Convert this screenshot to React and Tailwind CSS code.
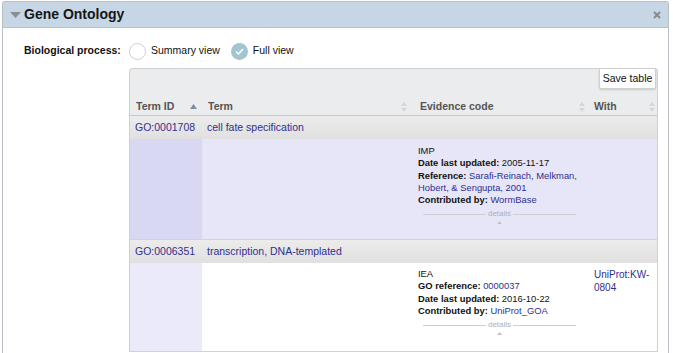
import React from "react";

const LINK = "text-[#2f2f8e]";

function SortBoth() {
  return (
    <svg width="6" height="10" viewBox="0 0 6 10">
      <path d="M3 0L6 4H0z" fill="#d6d6d6" />
      <path d="M3 10L6 6H0z" fill="#d6d6d6" />
    </svg>
  );
}

function SortAsc() {
  return (
    <svg width="7" height="5" viewBox="0 0 7 5" className="mb-[5px]">
      <path d="M3.5 0L7 5H0z" fill="#7d8ca6" />
    </svg>
  );
}

function Details() {
  return (
    <div className="ml-[5px] w-[153px] mt-[3px]">
      <div className="flex items-center h-[10px]">
        <div className="flex-1 h-px bg-[#cfcfcf]" />
        <span className="px-[2px] text-[8px] text-[#b0b0b0] leading-none">details</span>
        <div className="flex-1 h-px bg-[#cfcfcf]" />
      </div>
      <div className="flex justify-center mt-[2px]">
        <svg width="5" height="3" viewBox="0 0 5 3">
          <path d="M2.5 0L5 3H0z" fill="#c2c2c2" />
        </svg>
      </div>
    </div>
  );
}

function GroupRow({ id, term }) {
  return (
    <div className="grid grid-cols-[72px_211px_175px_69px] h-[23px] items-center bg-gradient-to-b from-[#ececec] to-[#e0e0e0]">
      <div className={`pl-[5px] ${LINK}`}>{id}</div>
      <div className={`pl-[5px] ${LINK}`}>{term}</div>
      <div />
      <div />
    </div>
  );
}

export default function App() {
  return (
    <div className="w-[673px] h-[353px] overflow-hidden bg-white font-['Liberation_Sans',Arial,sans-serif] text-[10.5px] text-[#111]">
      <div className="ml-[2px] mr-[4px] mt-[1px] h-[352px] border-x border-t border-[#b9bec4] rounded-t-[3px] flex flex-col">
        <div className="h-[26px] bg-[#c7d6e4] flex items-center border-b border-[#b5c3d1] shrink-0">
          <svg width="11" height="6" viewBox="0 0 11 6" className="ml-[7px]">
            <path d="M0 0H11L5.5 6z" fill="#8a8f96" />
          </svg>
          <span className="ml-[3px] text-[14px] font-bold text-[#161616]">Gene Ontology</span>
          <svg width="8" height="8" viewBox="0 0 8 8" className="ml-auto mr-[7px]">
            <path d="M1 1L7 7M7 1L1 7" stroke="#8a8a8a" strokeWidth="2" />
          </svg>
        </div>

        <div className="flex pl-[21px] pt-[14px]">
          <div className="w-[105px] h-[18px] flex items-center font-bold">Biological process:</div>
          <div className="w-[529px]">
            <div className="flex items-center h-[18px]">
              <span className="w-[17px] h-[17px] rounded-full border border-[#cfcfcf] bg-white" />
              <span className="ml-[5px]">Summary view</span>
              <span className="ml-[11px] w-[17px] h-[17px] rounded-full bg-[#a2c5d1] flex items-center justify-center">
                <svg width="9" height="7" viewBox="0 0 9 7">
                  <path d="M1 3.5L3.5 6L8 1" stroke="#fff" strokeWidth="1.6" fill="none" />
                </svg>
              </span>
              <span className="ml-[5px]">Full view</span>
            </div>

            <div className="mt-[8px] border-x border-t border-[#d0d0d0] rounded-t-[4px] bg-[#eaeced]">
              <div className="h-[29px] flex justify-end items-start">
                <button className="mt-[-1px] mr-[1px] w-[57px] h-[21px] bg-white border border-[#cfcfcf] rounded-[2px] shadow-[0_1px_2px_rgba(0,0,0,0.15)] text-[10.5px] text-[#111]">
                  Save table
                </button>
              </div>
              <div className="grid grid-cols-[72px_211px_175px_69px] h-[18px] items-center border-b border-[#c9c9c9] font-bold text-[#555]">
                <div className="flex items-end justify-between pl-[6px] pr-[5px]">
                  <span>Term ID</span>
                  <SortAsc />
                </div>
                <div className="flex items-center justify-between pl-[6px] pr-[6px]">
                  <span>Term</span>
                  <SortBoth />
                </div>
                <div className="flex items-center justify-between pl-[7px] pr-[3px]">
                  <span>Evidence code</span>
                  <SortBoth />
                </div>
                <div className="flex items-center justify-between pl-[6px] pr-[2px]">
                  <span>With</span>
                  <SortBoth />
                </div>
              </div>

              <GroupRow id="GO:0001708" term="cell fate specification" />
              <div className="grid grid-cols-[72px_211px_175px_69px] h-[101px] bg-[#e6e6f8] border-b border-[#d2d2d8] text-[9.4px] leading-[12.3px]">
                <div className="bg-[#d8d8f2]" />
                <div />
                <div className="pl-[5px] pr-[2px] pt-[6px] whitespace-nowrap">
                  <div>IMP</div>
                  <div><b>Date last updated:</b> 2005-11-17</div>
                  <div>
                    <b>Reference:</b> <span className={LINK}>Sarafi-Reinach, Melkman,</span>
                    <br />
                    <span className={LINK}>Hobert, &amp; Sengupta, 2001</span>
                  </div>
                  <div><b>Contributed by:</b> <span className={LINK}>WormBase</span></div>
                  <Details />
                </div>
                <div />
              </div>

              <GroupRow id="GO:0006351" term="transcription, DNA-templated" />
              <div className="grid grid-cols-[72px_211px_175px_69px] h-[89px] bg-white border-b border-[#d2d2d2] text-[9.4px] leading-[12.3px]">
                <div className="bg-[#eaeafa]" />
                <div />
                <div className="pl-[5px] pr-[2px] pt-[5px] whitespace-nowrap">
                  <div>IEA</div>
                  <div><b>GO reference:</b> <span className={LINK}>0000037</span></div>
                  <div><b>Date last updated:</b> 2016-10-22</div>
                  <div><b>Contributed by:</b> <span className={LINK}>UniProt_GOA</span></div>
                  <Details />
                </div>
                <div className={`pl-[6px] pt-[5px] text-[10px] leading-[13px] whitespace-nowrap ${LINK}`}>
                  UniProt:KW-
                  <br />
                  0804
                </div>
              </div>
            </div>
          </div>
        </div>
      </div>
    </div>
  );
}
